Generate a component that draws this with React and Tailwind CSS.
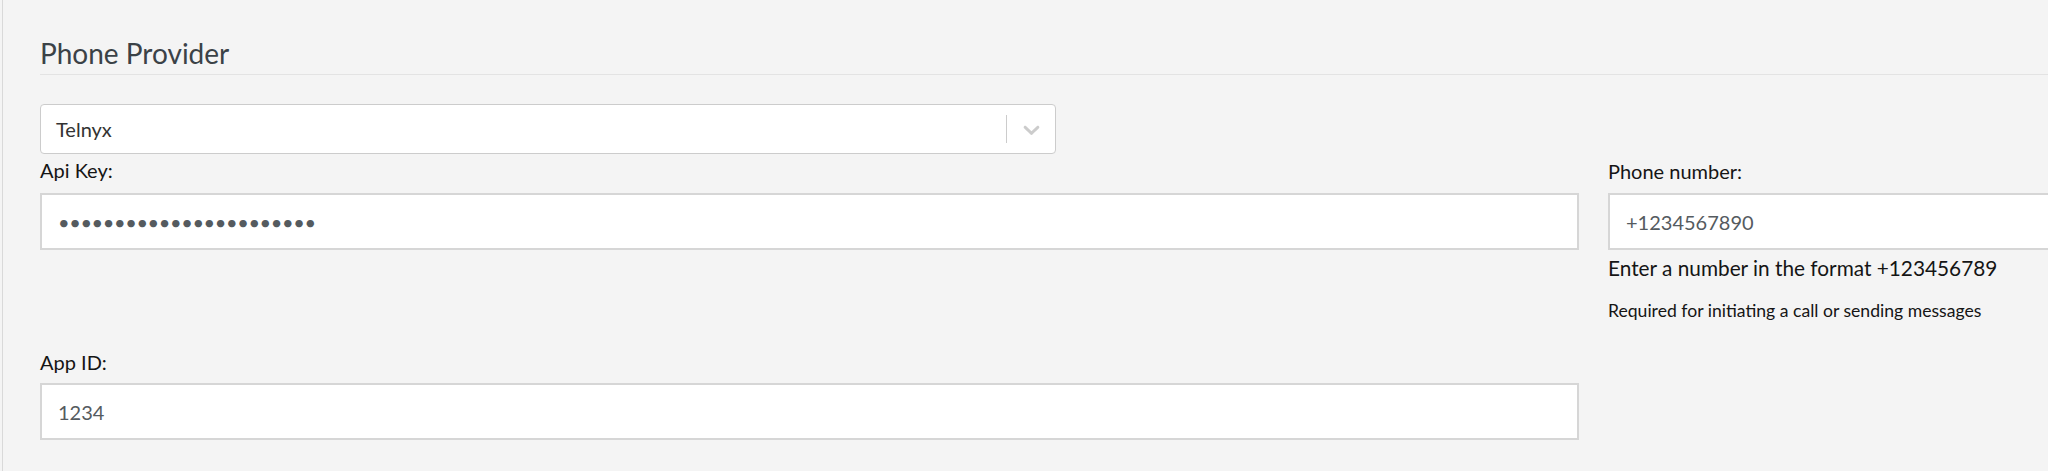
import { useState } from 'react'

const font = { fontFamily: 'Lato, "Open Sans", Arial, sans-serif' }

function Chevron() {
  return (
    <svg width="27" height="27" viewBox="0 0 20 20" fill="#cccccc" aria-hidden="true">
      <path d="M4.516 7.548c0.436-0.446 1.043-0.481 1.576 0l3.908 3.747 3.908-3.747c0.533-0.481 1.141-0.446 1.574 0 0.436 0.445 0.408 1.197 0 1.615-0.406 0.418-4.695 4.502-4.695 4.502-0.217 0.223-0.502 0.335-0.787 0.335s-0.57-0.112-0.789-0.335c0 0-4.287-4.084-4.695-4.502s-0.436-1.17 0-1.615z" />
    </svg>
  )
}

function TextInput({ type = 'text', value, onChange, className = '' }) {
  return (
    <input
      type={type}
      value={value}
      onChange={e => onChange(e.target.value)}
      className={`block w-full h-[57px] bg-white border-2 border-[#d6d6d6] pl-[16px] pr-3 text-[20px] leading-[24px] text-[#555b5f] outline-none ${className}`}
    />
  )
}

export default function App() {
  const [apiKey, setApiKey] = useState('KEY0123456789abcdefghij')
  const [phone, setPhone] = useState('+1234567890')
  const [appId, setAppId] = useState('1234')

  return (
    <div className="h-[471px] w-[2048px] overflow-hidden bg-[#f4f4f4] pl-[2px]" style={font}>
      <div className="h-full border-l border-[#d9d9d9] pl-[37px]">
        <h2 className="pt-[36px] pb-[4px] border-b border-[#e3e3e3] text-[28px] leading-[34px] font-normal text-[#3b4247]">
          Phone Provider
        </h2>

        {/* Provider select */}
        <div className="mt-[29px] w-[1016px] h-[50px] flex items-center bg-white border border-[#cccccc] rounded-[4px]">
          <div className="flex-1 pl-[15px] text-[20px] leading-[24px] text-[#333333]">Telnyx</div>
          <span className="w-px h-[28px] bg-[#cccccc]"></span>
          <span className="ml-[11px] mr-[10px] flex items-center">
            <Chevron />
          </span>
        </div>

        <div className="mt-[4px] flex gap-[29px]">
          <div className="w-[1539px] shrink-0">
            <label className="block text-[20px] leading-[24px] text-[#151515]">Api Key:</label>
            <div className="mt-[11px]">
              <TextInput type="password" value={apiKey} onChange={setApiKey} className="tracking-[-0.4px]" />
            </div>
          </div>
          <div className="w-[800px] shrink-0">
            <label className="block pt-[1px] text-[20px] leading-[24px] text-[#151515]">Phone number:</label>
            <div className="mt-[10px]">
              <TextInput value={phone} onChange={setPhone} />
            </div>
            <p className="mt-[5px] text-[20.8px] leading-[25px] text-[#151515]">Enter a number in the format +123456789</p>
            <p className="mt-[20px] text-[17.6px] leading-[21px] text-[#151515]">Required for initiating a call or sending messages</p>
          </div>
        </div>

        <div className="mt-[29px] w-[1539px]">
          <label className="block text-[20px] leading-[24px] text-[#151515]">App ID:</label>
          <div className="mt-[9px]">
            <TextInput value={appId} onChange={setAppId} />
          </div>
        </div>
      </div>
    </div>
  )
}
